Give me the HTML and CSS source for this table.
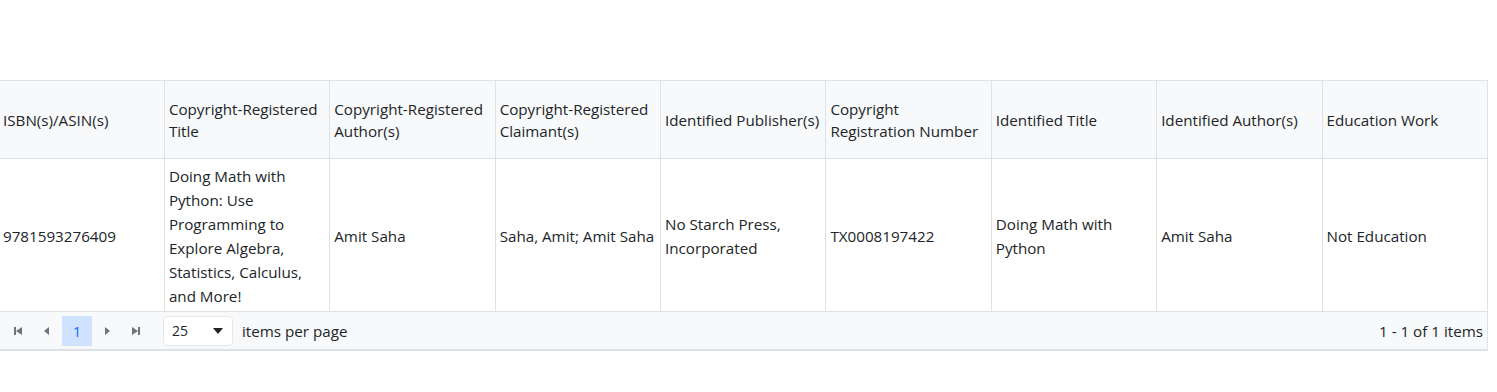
FILE: index.html
```html
<!DOCTYPE html>
<html lang="en">
<head>
  <meta charset="UTF-8" />
  <title>Copyright Registrations</title>
  <link rel="stylesheet" href="styles.css">
</head>
<body>
  <div class="grid">
    <table class="grid-table">
      <thead>
        <tr>
          <th>ISBN(s)/ASIN(s)</th>
          <th>Copyright-Registered Title</th>
          <th>Copyright-Registered Author(s)</th>
          <th>Copyright-Registered Claimant(s)</th>
          <th>Identified Publisher(s)</th>
          <th>Copyright Registration Number</th>
          <th>Identified Title</th>
          <th>Identified Author(s)</th>
          <th>Education Work</th>
        </tr>
      </thead>
      <tbody>
        <tr>
          <td>9781593276409</td>
          <td>Doing Math with Python: Use Programming to Explore Algebra, Statistics, Calculus, and More!</td>
          <td>Amit Saha</td>
          <td>Saha, Amit; Amit Saha</td>
          <td>No Starch Press, Incorporated</td>
          <td>TX0008197422</td>
          <td>Doing Math with Python</td>
          <td>Amit Saha</td>
          <td>Not Education</td>
        </tr>
      </tbody>
    </table>

    <div class="pager">
      <div class="pager-nav">
        <button class="nav-btn" title="Go to the first page">
          <svg width="10" height="10" viewBox="0 0 10 10"><rect x="1" y="1" width="2" height="8"/><polygon points="9,1 9,9 3,5"/></svg>
        </button>
        <button class="nav-btn" title="Go to the previous page">
          <svg width="10" height="10" viewBox="0 0 10 10"><polygon points="7,1 7,9 2,5"/></svg>
        </button>
        <button class="page-btn selected">1</button>
        <button class="nav-btn" title="Go to the next page">
          <svg width="10" height="10" viewBox="0 0 10 10"><polygon points="3,1 3,9 8,5"/></svg>
        </button>
        <button class="nav-btn" title="Go to the last page">
          <svg width="10" height="10" viewBox="0 0 10 10"><polygon points="1,1 1,9 7,5"/><rect x="7" y="1" width="2" height="8"/></svg>
        </button>
      </div>
      <div class="page-size">
        <div class="size-select">
          <span>25</span>
          <svg class="caret" width="10" height="8" viewBox="0 0 10 8"><polygon points="0,1 10,1 5,7"/></svg>
        </div>
        <span>items per page</span>
      </div>
      <div class="pager-info">1 - 1 of 1 items</div>
    </div>
  </div>
</body>
</html>
```

FILE: styles.css
```css
* { margin: 0; padding: 0; box-sizing: border-box; }
body {
  background: #fff;
  color: #212529;
  font-family: 'Open Sans', 'Noto Sans', sans-serif;
  font-size: 15.2px;
  padding-top: 80px;
}
.grid {
  width: 1490px;
  margin-left: -2px;
  border: 1px solid #dee2e6;
  border-right: none;
}
.grid-table {
  width: 100%;
  border-collapse: collapse;
  table-layout: fixed;
}
.grid-table th {
  background: #f8f9fa;
  font-weight: 400;
  text-align: left;
  line-height: 22px;
  padding: 17px 4px 16px;
  border-left: 1px solid #dee2e6;
  border-bottom: 1px solid #dee2e6;
  vertical-align: middle;
}
.grid-table td {
  line-height: 24px;
  padding: 5px 4px 3px;
  border-left: 1px solid #dee2e6;
  vertical-align: middle;
}
.grid-table th:first-child,
.grid-table td:first-child { border-left: none; }
.grid-table th:last-child,
.grid-table td:last-child { border-right: 1px solid #dee2e6; }
.pager {
  display: flex;
  align-items: center;
  height: 39px;
  padding: 0 4px 0 4px;
  background: #f8f9fa;
  border-top: 1px solid #dee2e6;
  border-bottom: 1px solid #dee2e6;
  border-right: 1px solid #dee2e6;
}
.pager-nav {
  display: flex;
  align-items: center;
  gap: 1px;
}
.pager-nav button {
  height: 30px;
  border: none;
  background: transparent;
  font-family: inherit;
  font-size: 15px;
  display: flex;
  align-items: center;
  justify-content: center;
  cursor: pointer;
}
.nav-btn { width: 28px; }
.nav-btn:first-child { margin-left: 1px; }
.nav-btn svg { fill: #6c757d; }
.page-btn { width: 30px; color: #0d6efd; }
.page-btn.selected { background: #cfe2ff; }
.page-size {
  display: flex;
  align-items: center;
  gap: 9px;
  margin-left: 13px;
}
.size-select {
  width: 70px;
  height: 30px;
  background: #fff;
  border: 1px solid #e6e8ea;
  border-radius: 4px;
  display: flex;
  align-items: center;
  justify-content: space-between;
  padding: 0 9px 0 8px;
  font-size: 14px;
}
.caret { fill: #212529; }
.pager-info { margin-left: auto; }
```
